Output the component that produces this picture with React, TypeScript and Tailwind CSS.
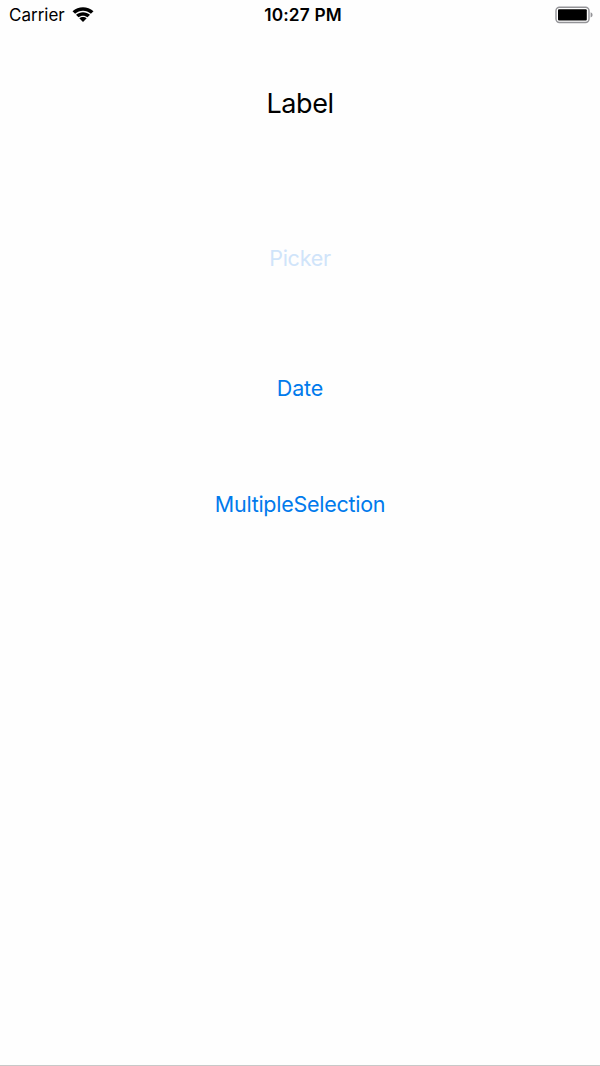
export default function App() {
  return (
    <main className="flex h-[1066px] w-[600px] flex-col border-b border-[#c8c8c8] bg-[#fefefe] font-['Inter',sans-serif] text-black">
      <header className="grid h-[30px] grid-cols-3 items-center pl-[9px] pr-[7px]">
        <div className="flex items-center gap-[7px] text-[17px]">
          <span className="pt-[2px]">Carrier</span>
          <svg width="22" height="16" viewBox="0 0 22 16">
            <path d="M0.5 4.2C6.5-1.2 15.5-1.2 21.5 4.2L18.9 6.8C14.3 2.8 7.7 2.8 3.1 6.8Z" />
            <path d="M4 7.8C8 4.4 14 4.4 18 7.8L15.5 10.3C13 8.2 9 8.2 6.5 10.3Z" />
            <path d="M7.3 11.3C9.4 9.5 12.6 9.5 14.7 11.3L11 15Z" />
          </svg>
        </div>
        <span className="pl-[4px] text-center text-[17.3px] font-semibold leading-[26px] tracking-[0.15px]">10:27 PM</span>
        <svg className="justify-self-end" width="38" height="18" viewBox="0 0 38 18">
          <rect x="1" y="1.2" width="33" height="15.3" rx="3.5" fill="none" stroke="#939397" strokeWidth="1.4" />
          <rect x="3" y="3.2" width="28.8" height="11.3" rx="1" />
          <path d="M35.6 6.2q2 .8 2 2.7t-2 2.7z" fill="#939397" />
        </svg>
      </header>
      <h1 className="mt-[54px] text-center text-[27px] leading-10 tracking-[-0.4px]">Label</h1>
      <section className="mt-[114px] flex flex-col items-center text-[21.5px] leading-10 tracking-[-0.27px] text-[#007aec]">
        <button className="text-[#d0e4fa]">Picker</button>
        <button className="mt-[90px] tracking-[-0.1px]">Date</button>
        <button className="mt-[76px]">MultipleSelection</button>
      </section>
    </main>
  );
}
